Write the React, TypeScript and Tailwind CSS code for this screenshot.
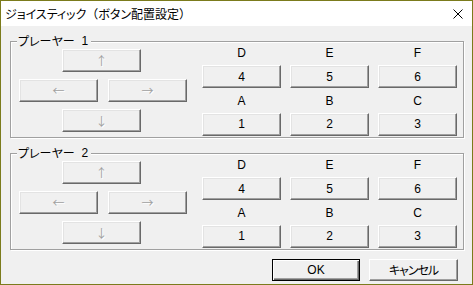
import React from "react";

const jp = "font-['Noto_Sans_CJK_JP','Noto_Sans',sans-serif]";
const lat = "font-['Liberation_Sans','Noto_Sans_CJK_JP',sans-serif]";
const palt = "[font-feature-settings:'palt']";

function Btn({ children, disabled, className = "" }: { children: React.ReactNode; disabled?: boolean; className?: string }) {
  return (
    <div
      className={`h-[23px] w-[79px] bg-[#f0f0f0] border border-t-white border-l-white border-b-[#696969] border-r-[#696969] shadow-[inset_-1px_-1px_0_#a0a0a0,inset_1px_1px_0_#e3e3e3] flex items-center justify-center text-[12px] leading-none ${
        disabled ? "text-[#a0a0a0] [text-shadow:1px_1px_0_#fff]" : "text-black"
      } ${className}`}
    >
      {children}
    </div>
  );
}

function Group({ n }: { n: string }) {
  const top = ["D", "E", "F"];
  const topN = ["4", "5", "6"];
  const bot = ["A", "B", "C"];
  const botN = ["1", "2", "3"];
  return (
    <div className="relative h-[97px] border border-[#a0a0a0] shadow-[1px_1px_0_#fff,inset_1px_1px_0_#fff] flex pl-[8px] pr-[6px]">
      <span className={`absolute left-[6px] top-[-9px] bg-[#f0f0f0] pl-[1px] pr-[3px] text-[12px] leading-[16px] text-black flex ${jp}`}>
        <span className={palt}>プレーヤー</span>
        <span className={`ml-[7px] ${lat}`}>{n}</span>
      </span>
      <div className={`mt-[7px] flex flex-col gap-[7px] w-[168px] ${jp}`}>
        <div className="pl-[43px]">
          <Btn disabled>↑</Btn>
        </div>
        <div className="flex gap-[10px]">
          <Btn disabled>←</Btn>
          <Btn disabled>→</Btn>
        </div>
        <div className="pl-[43px]">
          <Btn disabled>↓</Btn>
        </div>
      </div>
      <div className={`ml-[15px] grid grid-cols-[88px_88px_79px] ${lat}`}>
        {top.map((l) => (
          <div key={l} className="w-[79px] h-[22px] flex items-center justify-center text-[12px]">
            {l}
          </div>
        ))}
        {topN.map((l) => (
          <Btn key={l}>{l}</Btn>
        ))}
        {bot.map((l) => (
          <div key={l} className="w-[79px] h-[22px] flex items-center justify-center text-[12px]">
            {l}
          </div>
        ))}
        {botN.map((l) => (
          <Btn key={l}>{l}</Btn>
        ))}
      </div>
    </div>
  );
}

export default function App() {
  return (
    <div className="w-[473px] h-[285px] border border-[#7b7b1c] flex flex-col bg-[#f0f0f0] text-black">
      <div className="h-[25px] bg-white flex items-center justify-between pl-[4px] pr-[9px]">
        <span className={`text-[12px] leading-none ${jp}`}>
          <span className={palt}>ジョイスティック</span>（<span className={palt}>ボタン配置設定</span>）
        </span>
        <svg width="10" height="10" viewBox="0 0 10 10">
          <path d="M0.5 0.5 L9.5 9.5 M9.5 0.5 L0.5 9.5" stroke="#000" strokeWidth="1" />
        </svg>
      </div>
      <div className="flex-1 pt-[15px] pl-[9px] pr-[8px]">
        <Group n="1" />
        <div className="mt-[15px]">
          <Group n="2" />
        </div>
        <div className={`mt-[9px] flex justify-end gap-[9px] mr-[6px] ${jp}`}>
          <div className={`h-[22px] w-[88px] border border-black bg-[#f0f0f0] shadow-[inset_1px_1px_0_#fff,inset_-1px_-1px_0_#696969,inset_-2px_-2px_0_#a0a0a0] flex items-center justify-center text-[12px] leading-none ${lat}`}>
            OK
          </div>
          <div className={`h-[22px] w-[89px] border border-t-white border-l-white border-b-[#696969] border-r-[#696969] bg-[#f0f0f0] shadow-[inset_-1px_-1px_0_#a0a0a0] flex items-center justify-center text-[12px] leading-none tracking-[-1px] ${palt}`}>
            キャンセル
          </div>
        </div>
      </div>
    </div>
  );
}
